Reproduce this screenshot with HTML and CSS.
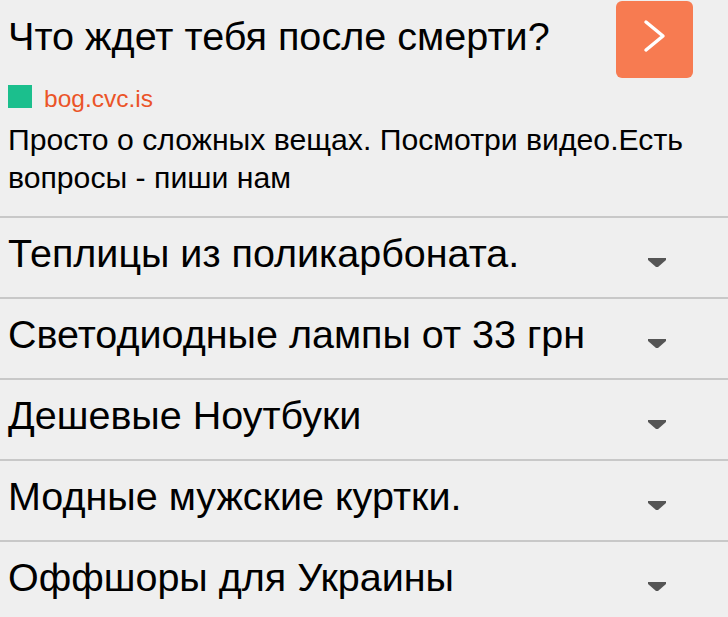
FILE: index.html
```html
<!DOCTYPE html>
<html lang="ru">
<head>
<meta charset="utf-8">
<link rel="stylesheet" href="styles.css">
</head>
<body>
<div class="ad">
  <div class="ad-head">
    <div class="ad-title">Что ждет тебя после смерти?</div>
    <div class="ad-btn">
      <svg width="77" height="77" viewBox="0 0 77 77"><polyline points="30,21 47,35 30,49" fill="none" stroke="#fff" stroke-width="3.5" stroke-linecap="round" stroke-linejoin="round"/></svg>
    </div>
  </div>
  <div class="ad-src"><span class="ad-sq"></span><span class="ad-url">bog.cvc.is</span></div>
  <div class="ad-desc">Просто о сложных вещах. Посмотри видео.Есть вопросы - пиши нам</div>
</div>
<ul class="list">
  <li class="row"><span class="row-text">Теплицы из поликарбоната.</span><svg class="row-arrow" width="18" height="9" viewBox="0 0 18 9"><polygon points="0,0 18,0 18,2 10,9 8,9 0,2" fill="#555"/></svg></li>
  <li class="row"><span class="row-text">Светодиодные лампы от 33 грн</span><svg class="row-arrow" width="18" height="9" viewBox="0 0 18 9"><polygon points="0,0 18,0 18,2 10,9 8,9 0,2" fill="#555"/></svg></li>
  <li class="row"><span class="row-text">Дешевые Ноутбуки</span><svg class="row-arrow" width="18" height="9" viewBox="0 0 18 9"><polygon points="0,0 18,0 18,2 10,9 8,9 0,2" fill="#555"/></svg></li>
  <li class="row"><span class="row-text">Модные мужские куртки.</span><svg class="row-arrow" width="18" height="9" viewBox="0 0 18 9"><polygon points="0,0 18,0 18,2 10,9 8,9 0,2" fill="#555"/></svg></li>
  <li class="row"><span class="row-text">Оффшоры для Украины</span><svg class="row-arrow" width="18" height="9" viewBox="0 0 18 9"><polygon points="0,0 18,0 18,2 10,9 8,9 0,2" fill="#555"/></svg></li>
</ul>
</body>
</html>
```
FILE: styles.css
```css
html, body {
  margin: 0;
  padding: 0;
  background: #efefef;
  font-family: "Liberation Sans", Arial, sans-serif;
  color: #000;
}
.ad {
  padding: 1px 35px 19px 8px;
}
.ad-head {
  display: flex;
  justify-content: space-between;
  align-items: flex-start;
}
.ad-title {
  font-size: 39.6px;
  line-height: 39px;
  margin-top: 16px;
}
.ad-btn {
  width: 77px;
  height: 77px;
  border-radius: 6px;
  background: #f77b51;
  display: flex;
}
.ad-src {
  display: flex;
  align-items: flex-start;
  gap: 12px;
  margin-top: 7px;
  height: 24px;
}
.ad-sq {
  width: 24px;
  height: 23px;
  background: #1bbf8d;
}
.ad-url {
  color: #eb5428;
  font-size: 24.5px;
  line-height: 25px;
  margin-top: 1px;
}
.ad-desc {
  margin-top: 12px;
  font-size: 30.2px;
  line-height: 38px;
}
.list {
  list-style: none;
  margin: 0;
  padding: 0;
}
.row {
  display: flex;
  justify-content: space-between;
  align-items: flex-start;
  height: 79px;
  border-top: 2px solid #c8c8c8;
  padding: 0 62px 0 8px;
}
.row-text {
  font-size: 39.5px;
  line-height: 40px;
  margin-top: 15px;
}
.row-arrow {
  margin-top: 40px;
}
```
